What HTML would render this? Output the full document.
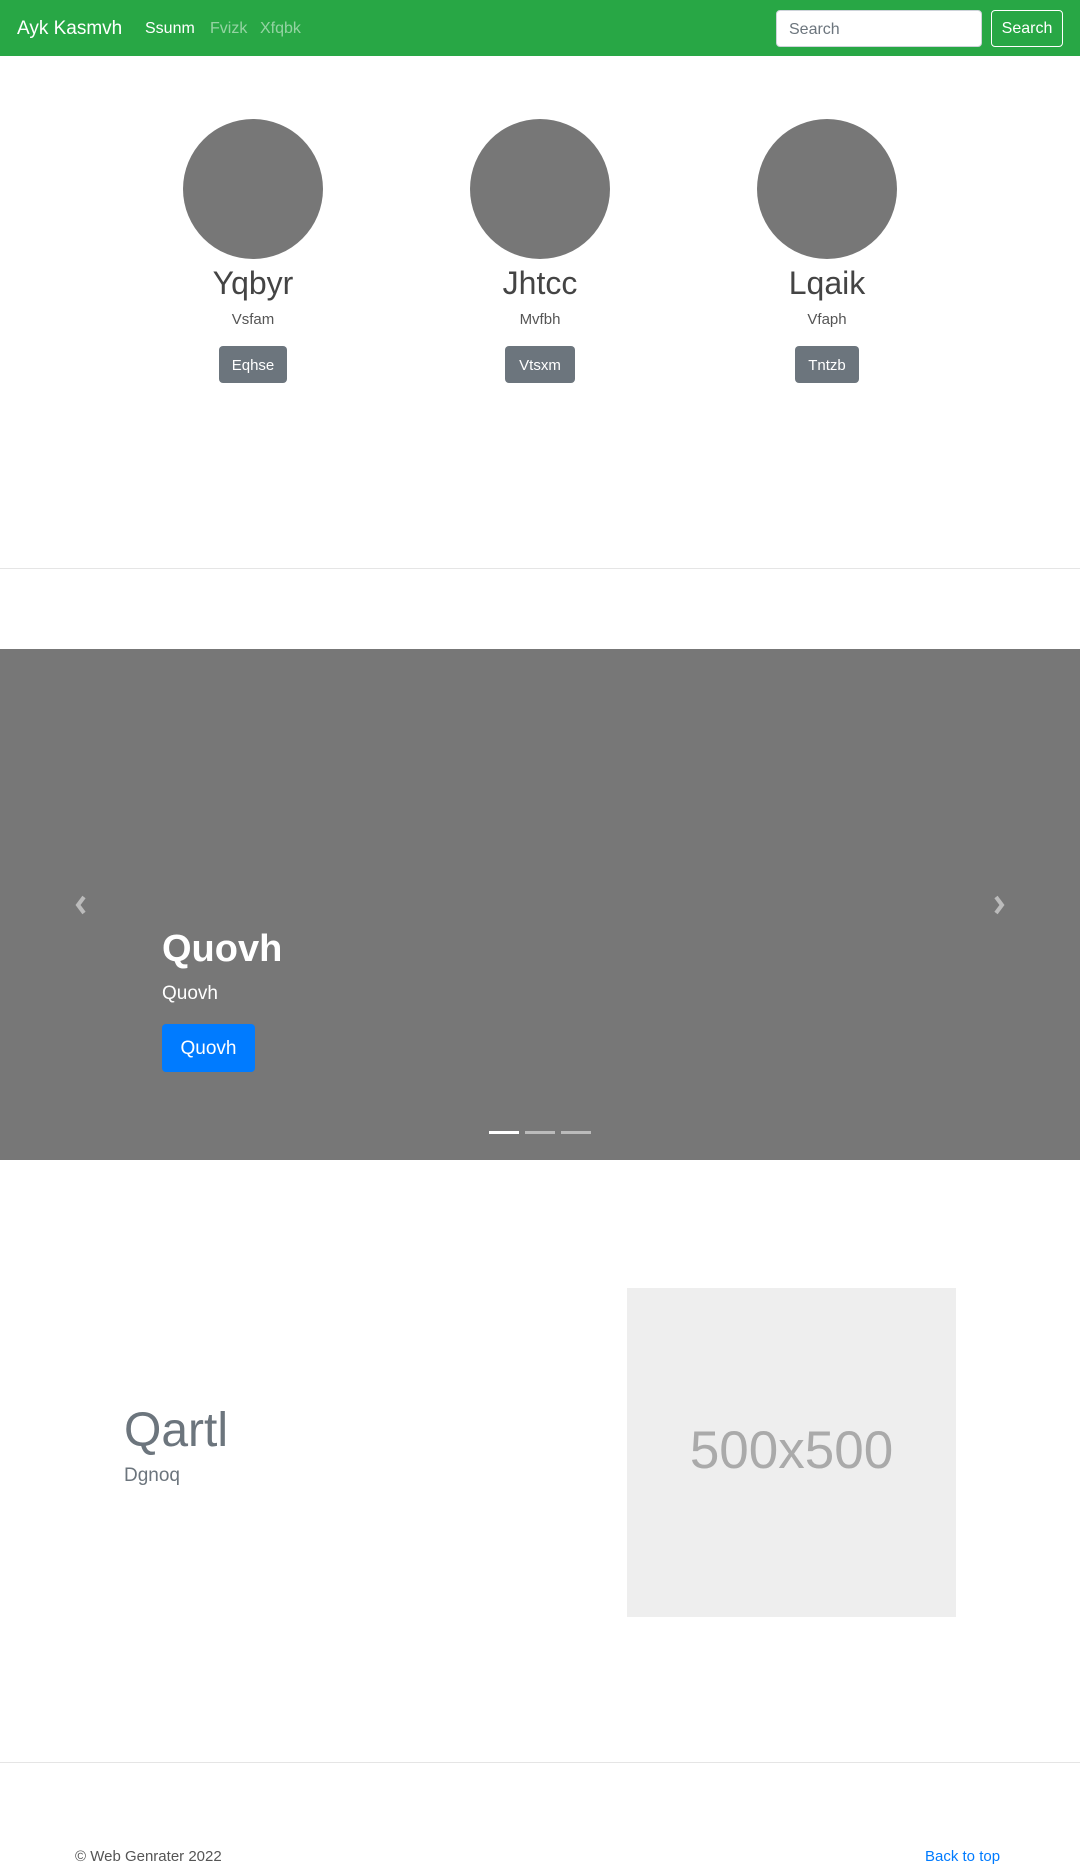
<!DOCTYPE html>
<html><head><meta charset="utf-8"><style>
*{box-sizing:border-box;margin:0;padding:0}
body{width:1080px;height:1868px;overflow:hidden;font-family:"Liberation Sans",sans-serif;color:#212529;background:#fff;position:relative}
.nav{position:absolute;left:0;top:0;width:1080px;height:56px;background:#28a745}
.a{position:absolute;white-space:nowrap}
.circ{position:absolute;width:140px;height:140px;border-radius:50%;background:#777;top:119px}
.name{position:absolute;width:300px;text-align:center;font-size:32px;color:#444;top:265px}
.sub{position:absolute;width:300px;text-align:center;font-size:15px;color:#555;top:311px}
.btn{position:absolute;top:346px;height:37px;background:#6c757d;color:#fff;border-radius:4px;font-size:15px;text-align:center;line-height:39px}
</style></head><body>
<div class="nav">
<div class="a" style="left:17px;top:18px;font-size:19px;color:#fff">Ayk Kasmvh</div>
<div class="a" style="left:145px;top:20px;font-size:16px;color:#fff">Ssunm</div>
<div class="a" style="left:210px;top:20px;font-size:16px;color:rgba(255,255,255,.5)">Fvizk</div>
<div class="a" style="left:260px;top:20px;font-size:16px;color:rgba(255,255,255,.5)">Xfqbk</div>
<div class="a" style="left:776px;top:10px;width:206px;height:37px;background:#fff;border-radius:4px;border:1px solid #ced4da;font-size:16px;color:#6c757d;padding:10px 12px">Search</div>
<div class="a" style="left:991px;top:10px;width:72px;height:37px;border:1px solid #fff;border-radius:4px;font-size:16px;color:#fff;text-align:center;line-height:35px">Search</div>
</div>
<div class="circ" style="left:183px"></div>
<div class="circ" style="left:470px"></div>
<div class="circ" style="left:757px"></div>
<div class="name" style="left:103px">Yqbyr</div>
<div class="name" style="left:390px">Jhtcc</div>
<div class="name" style="left:677px">Lqaik</div>
<div class="sub" style="left:103px">Vsfam</div>
<div class="sub" style="left:390px">Mvfbh</div>
<div class="sub" style="left:677px">Vfaph</div>
<div class="btn" style="left:219px;width:68px">Eqhse</div>
<div class="btn" style="left:505px;width:70px">Vtsxm</div>
<div class="btn" style="left:795px;width:64px">Tntzb</div>
<div class="a" style="left:0;top:568px;width:1080px;height:1px;background:#e5e5e5"></div>
<div class="a" style="left:0;top:649px;width:1080px;height:511px;background:#777">
<svg class="a" style="left:73px;top:246px" width="16" height="20" viewBox="0 0 16 20"><path d="M11 2 L5 10 L11 18" stroke="#bbb" stroke-width="4" fill="none"/></svg>
<svg class="a" style="left:991px;top:246px" width="16" height="20" viewBox="0 0 16 20"><path d="M5 2 L11 10 L5 18" stroke="#bbb" stroke-width="4" fill="none"/></svg>
<div class="a" style="left:162px;top:279px;font-size:38px;font-weight:bold;color:#fff">Quovh</div>
<div class="a" style="left:162px;top:334px;font-size:19px;color:#fff">Quovh</div>
<div class="a" style="left:162px;top:375px;width:93px;height:48px;background:#007bff;border-radius:4px;color:#fff;font-size:19px;text-align:center;line-height:50px">Quovh</div>
<div class="a" style="left:489px;top:482px;width:30px;height:3px;background:#fff"></div>
<div class="a" style="left:525px;top:482px;width:30px;height:3px;background:#bbb"></div>
<div class="a" style="left:561px;top:482px;width:30px;height:3px;background:#bbb"></div>
</div>
<div class="a" style="left:124px;top:1403px;font-size:48px;font-weight:300;color:#6c757d">Qartl</div>
<div class="a" style="left:124px;top:1465px;font-size:19px;color:#6c757d">Dgnoq</div>
<div class="a" style="left:627px;top:1288px;width:329px;height:329px;background:#eee;color:#aaa;font-size:53px;text-align:center;line-height:325px">500x500</div>
<div class="a" style="left:0;top:1762px;width:1080px;height:1px;background:#e5e5e5"></div>
<div class="a" style="left:75px;top:1848px;font-size:15px;color:#555">© Web Genrater 2022</div>
<div class="a" style="left:925px;top:1848px;font-size:15px;color:#007bff">Back to top</div>
</body></html>
